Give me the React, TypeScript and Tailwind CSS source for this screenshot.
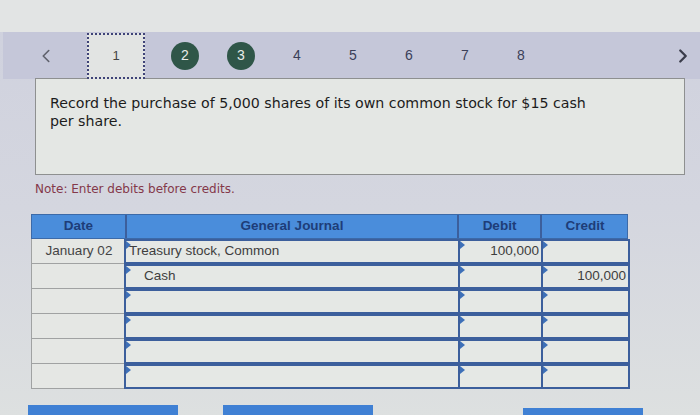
import { ChevronLeft, ChevronRight } from 'lucide-react';

type Row = { date: string; account: string; indent?: boolean; debit: string; credit: string };

const rows: Row[] = [
  { date: 'January 02', account: 'Treasury stock, Common', debit: '100,000', credit: '' },
  { date: '', account: 'Cash', indent: true, debit: '', credit: '100,000' },
  { date: '', account: '', debit: '', credit: '' },
  { date: '', account: '', debit: '', credit: '' },
  { date: '', account: '', debit: '', credit: '' },
  { date: '', account: '', debit: '', credit: '' },
];

function Marker() {
  return (
    <span className="absolute left-0 top-0 w-0 h-0 border-t-[4px] border-b-[4px] border-l-[5px] border-t-transparent border-b-transparent border-l-[#3e70b8]" />
  );
}

function InputCell({ value, right, indent }: { value: string; right?: boolean; indent?: boolean }) {
  return (
    <div className="relative h-[25px] border-2 border-[#3c5f9c] bg-[#e5e8e5] flex items-center text-[13.5px] text-[#3e3e3e] -ml-[2px]">
      <Marker />
      <span className={right ? 'ml-auto pr-[2px]' : indent ? 'pl-[18px]' : 'pl-[3px]'}>{value}</span>
    </div>
  );
}

export default function App() {
  const pages = ['2', '3', '4', '5', '6', '7', '8'];
  return (
    <div
      className="w-[700px] h-[415px] overflow-hidden bg-gradient-to-b from-[#cfd1de] via-[#d4d6df] to-[#dde0e0] relative"
      style={{ fontFamily: '"Liberation Sans", Arial, sans-serif' }}
    >
      <div className="h-[32px] bg-[#e2e4e4]" />

      {/* question nav */}
      <div className="h-[47px] ml-[3px] bg-[#c5c7d9] flex items-stretch">
        <div className="w-[84px] flex items-center justify-end pr-[30px] text-[#5f616c]">
          <ChevronLeft size={22} strokeWidth={1.75} />
        </div>
        <div className="w-[58px] mt-[1px] border-2 border-dotted border-[#3f4378] bg-[#e2e4e3] flex items-center justify-center text-[13px] text-[#444]">
          1
        </div>
        <div className="w-[12px]" />
        {pages.map((p) => (
          <div key={p} className="w-[56px] flex items-center justify-center">
            {p === '2' || p === '3' ? (
              <span className="w-[28px] h-[28px] rounded-full bg-[#2f5648] text-[#e8ece9] text-[14px] flex items-center justify-center">
                {p}
              </span>
            ) : (
              <span className="text-[14px] text-[#3b3f58]">{p}</span>
            )}
          </div>
        ))}
        <div className="ml-auto pr-[6px] flex items-center text-[#3a3c4a]">
          <ChevronRight size={22} strokeWidth={2.5} />
        </div>
      </div>

      {/* question box */}
      <div
        className="ml-[35px] w-[650px] h-[97px] -mt-[1px] border border-[#8e9090] bg-[#e4e7e4] pl-[14px] pt-[15px] text-[14.2px] leading-[18px] text-[#1c1c1c]"
        style={{ fontFamily: '"DejaVu Sans", Verdana, sans-serif' }}
      >
        Record the purchase of 5,000 shares of its own common stock for $15 cash
        <br />
        per share.
      </div>

      <div
        className="ml-[35px] mt-[5px] text-[12px] text-[#84384a]"
        style={{ fontFamily: '"DejaVu Sans", Verdana, sans-serif' }}
      >
        Note: Enter debits before credits.
      </div>

      {/* journal table */}
      <div className="ml-[31px] mt-[16px] w-[597px]">
        <div className="grid grid-cols-[95px_332px_83px_86px] h-[25px] bg-[#4a8ddb] border border-[#3c6aa8] text-[13.5px] font-bold text-[#1e3d78]">
          <div className="flex items-center justify-center border-r-2 border-[#3c5f9c]">Date</div>
          <div className="flex items-center justify-center border-r-2 border-[#3c5f9c]">General Journal</div>
          <div className="flex items-center justify-center border-r-2 border-[#3c5f9c]">Debit</div>
          <div className="flex items-center justify-center">Credit</div>
        </div>
        {rows.map((r, i) => (
          <div key={i} className="grid grid-cols-[95px_334px_83px_87px]">
            <div className="h-[25px] border-l border-b border-[#a0a2a2] bg-[#e5e7e4] flex items-center justify-center text-[13.5px] text-[#444]">
              {r.date}
            </div>
            <InputCell value={r.account} indent={r.indent} />
            <InputCell value={r.debit} right />
            <InputCell value={r.credit} right />
          </div>
        ))}
      </div>

      {/* action buttons */}
      <div className="absolute left-0 top-[405px] w-full flex">
        <div className="ml-[28px] w-[150px] h-[12px] bg-[#3f80d4]" />
        <div className="ml-[45px] w-[150px] h-[12px] bg-[#3f80d4]" />
        <div className="ml-[150px] w-[120px] h-[12px] mt-[3px] bg-[#3f80d4]" />
      </div>
    </div>
  );
}
